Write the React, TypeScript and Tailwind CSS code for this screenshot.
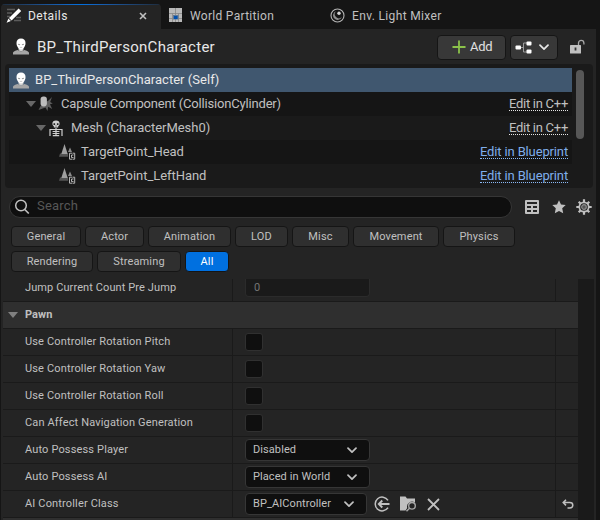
import type { ReactNode } from "react";

const TAGS = [
  [
    { label: "General", width: "w-[70px]" },
    { label: "Actor", width: "w-[59px]" },
    { label: "Animation", width: "w-[83px]" },
    { label: "LOD", width: "w-[53px]" },
    { label: "Misc", width: "w-[57px]" },
    { label: "Movement", width: "w-[86px]" },
    { label: "Physics", width: "w-[72px]" },
  ],
  [
    { label: "Rendering", width: "w-[82px]" },
    { label: "Streaming", width: "w-[84px]" },
    { label: "All", width: "w-[44px]", active: true },
  ],
];

const CHECKS = [
  "Use Controller Rotation Pitch",
  "Use Controller Rotation Yaw",
  "Use Controller Rotation Roll",
  "Can Affect Navigation Generation",
];

function PersonIcon() {
  return (
    <svg width="16" height="17" viewBox="0 0 16 17" className="shrink-0">
      <path d="M0 16.500v-1.800c0-1.300 2.200-2 4.700-2.800L8 13.800l3.300-1.900c2.500.8 4.700 1.500 4.700 2.800v1.800z" fill="#a6a6a6" />
      <path d="M5.600 10h4.800v2.300L8 13.700l-2.400-1.400z" fill="#cfcfcf" />
      <path d="M8 .4c2.900 0 4.500 1.700 4.500 4.500 0 1-.2 2-.5 2.800-.8 2.100-2.400 3.900-4 3.900S4.800 9.800 4 7.700c-.3-.8-.5-1.800-.5-2.800C3.500 2.100 5.100.4 8 .4z" fill="#fff" />
      <path d="M5.100 6.300l2 .5M10.900 6.300l-2 .5" stroke="#999" strokeWidth="1.100" />
      <path d="M6.800 9.400h2.400" stroke="#bbb" strokeWidth=".8" />
    </svg>
  );
}

function DetailsIcon() {
  return (
    <svg width="16" height="16" viewBox="0 0 16 16" className="shrink-0">
      <path d="M1 1.500h8M1 5h5M1 8.500h3M10 9.500h5M8 12.500h7" stroke="#5c5c5c" strokeWidth="1.300" />
      <path d="M12.600.6l2.600 2.400-9.600 9.400-2.600-2.500zM2.400 10.600l2.500 2.500-4.300 1.700z" fill="#fff" />
    </svg>
  );
}

function PartitionIcon() {
  return (
    <svg width="13" height="14" viewBox="0 0 13 14" className="shrink-0">
      <path d="M0 0h13v14H0z" fill="#b9b9b9" />
      <path d="M6.500 0v14M0 5.500h13M3.500 5.500v8.500M9.500 5.500v8.500M0 10.500h13" stroke="#858585" strokeWidth=".8" />
      <path d="M4 7h5.500v4.500H4z" fill="#5f7896" />
      <path d="M5 8h3.500v3H5z" fill="#0050b0" />
    </svg>
  );
}

function LightMixerIcon() {
  return (
    <svg width="15" height="15" viewBox="0 0 15 15" className="shrink-0">
      <circle cx="7.500" cy="7.500" r="6.500" fill="none" stroke="#b5b5b5" strokeWidth="1.100" />
      <path d="M6 3.200A4.500 4.500 0 1 0 11.800 9 3.900 3.900 0 0 1 6 3.200z" fill="#8f8f8f" />
      <circle cx="9" cy="5.300" r="1.700" fill="#d5d5d5" />
    </svg>
  );
}

function CapsuleIcon() {
  return (
    <svg width="15" height="16" viewBox="0 0 15 16" className="shrink-0">
      <path d="M8 6l2.500-1.500L14 1l-1.800 5 2.600 1.500-2.800.8 2.200 4.700-4-2.200-.7 4.200-2-3.600L.5 14l2.200-4.200z" fill="#5d5d5d" />
      <rect x="2.600" y=".6" width="6.300" height="9.800" rx="2.800" fill="#bcbcbc" />
    </svg>
  );
}

function SkeletonIcon() {
  return (
    <svg width="14" height="17" viewBox="0 0 14 17" className="shrink-0">
      <path d="M7 .6c2.300 0 3.600 1.200 3.600 3.200 0 1.300-.6 2-1.400 2.500v1.300H4.800V6.300C4 5.800 3.400 5.100 3.400 3.800 3.400 1.800 4.700.6 7 .6z" fill="#cfcfcf" />
      <path d="M4.500 3.300h1.600v1.600H4.500zM7.900 3.300h1.600v1.600H7.900zM6.600 5.500h.8v1.100h-.8z" fill="#222" />
      <path d="M1 16V9.500h12V16M3.600 11.500h6.800M3.600 13.500h6.800M3.800 15.700h6.400M7 8v8" fill="none" stroke="#cfcfcf" strokeWidth="1.200" />
    </svg>
  );
}

function TargetIcon() {
  return (
    <svg width="17" height="16" viewBox="0 0 17 16" className="shrink-0">
      <path d="M1 9.500L0 12.700h9V9.500z" fill="#555" />
      <path d="M5.500 0l3.200 10H2.300z" fill="#a0a0a0" />
      <path d="M11 3.500l2 4.500H9z" fill="#8b8b8b" />
      <path d="M13 9.200h-2.500v6H13M13.500 9.200h2.200v6h-2.200M14.500 11h-2v2.600h2" fill="none" stroke="#b5b5b5" strokeWidth="1" />
    </svg>
  );
}

function Chevron({ color = "#c0c0c0" }: { color?: string }) {
  return (
    <svg width="10" height="7" viewBox="0 0 10 7" className="shrink-0">
      <path d="M1 1.200l4 4 4-4" fill="none" stroke={color} strokeWidth="1.700" strokeLinecap="round" strokeLinejoin="round" />
    </svg>
  );
}

function Triangle({ color = "#686868" }: { color?: string }) {
  return (
    <svg width="10" height="6" viewBox="0 0 10 6" className="shrink-0">
      <path d="M0 0h10L5 6z" fill={color} />
    </svg>
  );
}

function TableIcon() {
  return (
    <svg width="14" height="14" viewBox="0 0 14 14">
      <rect width="14" height="14" rx="1" fill="#c0c0c0" />
      <path d="M2 2h10v2H2zM2 6h4v2H2zM8 6h4v2H8zM2 10h4v2H2zM8 10h4v2H8z" fill="#242424" />
    </svg>
  );
}

function StarIcon() {
  return (
    <svg width="14" height="14" viewBox="0 0 14 14">
      <path d="M7 .3l2 4.300 4.700.5-3.500 3.200 1 4.900L7 10.900l-4.200 2.300 1-4.900L.3 5.100 5 4.600z" fill="#c0c0c0" />
    </svg>
  );
}

function GearIcon() {
  return (
    <svg width="16" height="16" viewBox="0 0 16 16">
      <path d="M8 .3v15.400M.3 8h15.400M2.700 2.700l10.600 10.600M13.300 2.700L2.700 13.300" stroke="#c0c0c0" strokeWidth="2.200" />
      <circle cx="8" cy="8" r="4.700" fill="#242424" stroke="#c0c0c0" strokeWidth="1.700" />
      <circle cx="8" cy="8" r="2.300" fill="#555" stroke="#8c8c8c" strokeWidth="1.200" />
    </svg>
  );
}

function TreeRow({ indent, icon, label, tracking, link, className, arrow }: {
  indent: string;
  icon: ReactNode;
  label: string;
  tracking: string;
  link: "C++" | "Blueprint";
  className: string;
  arrow?: boolean;
}) {
  return (
    <div className={`flex h-6 items-center pr-1 ${indent} ${className}`}>
      {arrow && <Triangle />}
      <div className={`flex w-[17px] justify-center ${arrow ? "ml-px mr-[7px]" : "mr-[5px]"}`}>{icon}</div>
      <span className={`text-[13px] leading-6 ${tracking}`}>{label}</span>
      <a
        className={`ml-auto border-b border-dotted text-[13px] leading-[13px] ${
          link === "C++" ? "border-[#e5e5e5] tracking-[-0.27px]" : "border-[#8ab8f5] tracking-[-0.14px] text-[#7faeec]"
        }`}
      >
        Edit in {link}
      </a>
    </div>
  );
}

function PropertyRow({ label, children, reset }: { label: string; children: ReactNode; reset?: ReactNode }) {
  return (
    <div className="flex h-[27px] border-b border-[#1a1a1a]">
      <div className="w-[230px] border-r border-[#1a1a1a] pl-[22px] text-[11px] leading-[25px] tracking-[0.15px]">{label}</div>
      <div className="flex w-[323px] items-center border-r border-[#1a1a1a] pl-3">{children}</div>
      <div className="flex flex-1 items-center justify-center">{reset}</div>
    </div>
  );
}

function Select({ value, width }: { value: string; width: string }) {
  return (
    <button className={`flex h-[22px] items-center justify-between rounded-[4px] border border-[#363636] bg-[#0f0f0f] pl-[7px] pr-3 ${width}`}>
      <span className="text-[11px] leading-[18px] tracking-[0.08px]">{value}</span>
      <Chevron />
    </button>
  );
}

export default function App() {
  return (
    <div className="flex h-[520px] w-[600px] flex-col overflow-hidden bg-[#151515] pl-px pr-1 font-['Roboto',sans-serif] text-[#c0c0c0]">
      {/* Tabs */}
      <div className="flex h-[29px] shrink-0 items-end">
        <div className="flex h-[25px] w-[160px] flex-col overflow-hidden rounded-t-[4px] bg-[#242424]">
          <div className="h-px bg-linear-to-r from-[#1d2c3d] via-[#0070e0] to-[#1d2c3d]" />
          <div className="flex flex-1 items-center pb-[2px] pl-[5px] pr-[14px]">
            <DetailsIcon />
            <span className="ml-[6px] text-[12px] leading-[22px] tracking-[0.45px] text-[#e8e8e8]">Details</span>
            <svg width="8" height="8" viewBox="0 0 8 8" className="ml-auto">
              <path d="M1 1l6 6M7 1L1 7" stroke="#c0c0c0" strokeWidth="1.600" />
            </svg>
          </div>
        </div>
        <div className="flex h-[25px] w-[162px] items-center pb-[3px] pl-2">
          <PartitionIcon />
          <span className="ml-2 pt-[2px] text-[12px] tracking-[0.3px]">World Partition</span>
        </div>
        <div className="flex h-[25px] items-center pb-[3px] pl-[7px]">
          <LightMixerIcon />
          <span className="ml-[7px] pt-[2px] text-[12px] tracking-[0.35px]">Env. Light Mixer</span>
        </div>
      </div>

      <div className="flex min-h-0 flex-1 flex-col bg-[#242424]">
        {/* Object header */}
        <div className="flex h-[35px] shrink-0 items-center pl-3 pr-[11px]">
          <PersonIcon />
          <span className="ml-2 pt-px text-[15px] tracking-[0.27px] text-[#e8e8e8]">BP_ThirdPersonCharacter</span>
          <button className="ml-auto mt-px flex h-[25px] w-[69px] items-center rounded-[4px] border border-[#151515] bg-[#383838] pl-[14px]">
            <svg width="14" height="14" viewBox="0 0 14 14">
              <path d="M7 .5v13M.5 7h13" stroke="#8bc24a" strokeWidth="1.800" />
            </svg>
            <span className="ml-1 text-[13px] tracking-[-0.3px] text-[#e0e0e0]">Add</span>
          </button>
          <button className="ml-1 mt-px flex h-[25px] w-[48px] items-center gap-[7px] rounded-[4px] border border-[#151515] bg-[#383838] pl-1">
            <svg width="17" height="13" viewBox="0 0 17 13">
              <path d="M4 6.500h5M12 2H8.500v9H12" fill="none" stroke="#9a9a9a" strokeWidth="1" />
              <rect x=".5" y="4.500" width="5.500" height="4" rx="1" fill="#fff" />
              <rect x="11.500" y=".5" width="5" height="4" rx="1" fill="#fff" />
              <rect x="11.500" y="8.500" width="5" height="4" rx="1" fill="#fff" />
            </svg>
            <Chevron color="#e8e8e8" />
          </button>
          <svg width="15" height="15" viewBox="0 0 15 15" className="mb-px ml-3">
            <path d="M8.500 6V4a2.700 2.700 0 0 1 5.400 0v1.500" fill="none" stroke="#a8a8a8" strokeWidth="1.300" />
            <rect x="0" y="6" width="11" height="8.500" rx=".6" fill="#c0c0c0" />
            <path d="M5.500 8.500v3" stroke="#333" strokeWidth="1.800" />
          </svg>
        </div>

        {/* Component tree */}
        <div className="ml-1 flex h-[124px] w-[588px] shrink-0 rounded-[4px] bg-[#1a1a1a] pl-1 pt-1">
          <div className="w-[563px]">
            <div className="flex h-6 items-center bg-[#40576f] pl-1 text-[#e8e8e8]">
              <PersonIcon />
              <span className="ml-[6px] text-[13px] leading-6 tracking-[0.03px]">BP_ThirdPersonCharacter (Self)</span>
            </div>
            <TreeRow arrow indent="pl-[17px]" icon={<CapsuleIcon />} label="Capsule Component (CollisionCylinder)" tracking="tracking-[-0.17px]" link="C++" className="bg-[#151515]" />
            <TreeRow arrow indent="pl-[27px]" icon={<SkeletonIcon />} label="Mesh (CharacterMesh0)" tracking="tracking-[-0.04px]" link="C++" className="bg-[#1a1a1a]" />
            <TreeRow indent="pl-[50px]" icon={<TargetIcon />} label="TargetPoint_Head" tracking="tracking-[-0.03px]" link="Blueprint" className="bg-[#151515]" />
            <TreeRow indent="pl-[50px]" icon={<TargetIcon />} label="TargetPoint_LeftHand" tracking="tracking-[-0.05px]" link="Blueprint" className="bg-[#1a1a1a]" />
          </div>
          <div className="ml-1 mt-[2px] h-[69px] w-2 rounded-full bg-[#575757]" />
        </div>

        {/* Search */}
        <div className="mt-2 flex shrink-0 items-center pl-2">
          <div className="flex h-[22px] w-[503px] items-center rounded-full border border-[#363636] bg-[#0f0f0f] pl-1">
            <svg width="16" height="16" viewBox="0 0 16 16">
              <circle cx="7" cy="6.500" r="5.300" fill="none" stroke="#c0c0c0" strokeWidth="1.500" />
              <path d="M10.800 10.500l4 4" stroke="#c0c0c0" strokeWidth="1.700" />
            </svg>
            <span className="ml-[7px] pb-[2px] text-[13px] leading-[18px] tracking-[0.2px] text-[#575757]">Search</span>
          </div>
          <div className="ml-[13px] flex items-center">
            <TableIcon />
            <div className="ml-[13px]"><StarIcon /></div>
            <div className="ml-[10px]"><GearIcon /></div>
          </div>
        </div>

        {/* Section filters */}
        <div className="mt-2 flex shrink-0 flex-col gap-1 pl-[10px]">
          {TAGS.map((row, i) => (
            <div key={i} className="flex gap-1">
              {row.map((tag) => (
                <button
                  key={tag.label}
                  className={`h-[21px] rounded-[4px] border border-[#151515] text-[11px] leading-[18px] tracking-[0.15px] ${tag.width} ${
                    "active" in tag ? "bg-[#0070e0] text-white" : "bg-[#2f2f2f]"
                  }`}
                >
                  {tag.label}
                </button>
              ))}
            </div>
          ))}
        </div>

        {/* Properties */}
        <div className="mt-[7px] flex min-h-0 flex-1 pl-[2px]">
          <div className="w-[575px]">
            <div className="flex h-[23px] border-b border-[#1a1a1a]">
              <div className="w-[230px] border-r border-[#1a1a1a] pl-[22px] text-[11px] leading-[17px] tracking-[0.1px]">Jump Current Count Pre Jump</div>
              <div className="w-[323px] border-r border-[#1a1a1a] pl-3">
                <div className="h-[18px] w-[125px] rounded-b-[4px] border border-t-0 border-[#2b2b2b] bg-[#1a1a1a] pl-2 text-[11px] leading-[17px] text-[#757575]">0</div>
              </div>
            </div>
            <div className="flex h-[27px] items-center border-b border-[#1a1a1a] bg-[#2f2f2f] pl-[5px]">
              <Triangle color="#808080" />
              <span className="ml-[7px] text-[11px] leading-[24px] font-bold tracking-[0.05px]">Pawn</span>
            </div>
            {CHECKS.map((label) => (
              <PropertyRow key={label} label={label}>
                <div className="h-[18px] w-[18px] rounded-[3px] border border-[#303030] bg-[#0f0f0f]" />
              </PropertyRow>
            ))}
            <PropertyRow label="Auto Possess Player">
              <Select value="Disabled" width="w-[125px]" />
            </PropertyRow>
            <PropertyRow label="Auto Possess AI">
              <Select value="Placed in World" width="w-[125px]" />
            </PropertyRow>
            <PropertyRow
              label="AI Controller Class"
              reset={
                <svg width="12" height="11" viewBox="0 0 12 11" className="ml-px">
                  <path d="M4 .8L1.200 3.600 4 6.400M1.500 3.600h6.300c4 0 4 5.400 0 5.400H5.500" fill="none" stroke="#c0c0c0" strokeWidth="1.500" />
                </svg>
              }
            >
              <Select value="BP_AIController" width="w-[122px]" />
              <svg width="16" height="16" viewBox="0 0 16 16" className="ml-[7px]">
                <path d="M14 4.400A6.900 6.900 0 1 0 14 11.600" fill="none" stroke="#c0c0c0" strokeWidth="1.500" />
                <path d="M15.500 8H5M8.300 4.500L4.800 8l3.500 3.500" fill="none" stroke="#c0c0c0" strokeWidth="1.900" />
              </svg>
              <svg width="17" height="16" viewBox="0 0 17 16" className="ml-[10px]">
                <path d="M0 .5h5.500l1.500 2h8v4.200a5 5 0 0 0-7.800 5.300l-1.700 2.500H0z" fill="#c0c0c0" />
                <circle cx="12" cy="9.800" r="3.300" fill="#242424" stroke="#a8a8a8" strokeWidth="1.400" />
                <path d="M9.500 12.300l-3 3" stroke="#a8a8a8" strokeWidth="1.500" />
              </svg>
              <svg width="13" height="13" viewBox="0 0 13 13" className="ml-[10px]">
                <path d="M1 1l11 11M12 1L1 12" stroke="#c0c0c0" strokeWidth="1.800" />
              </svg>
            </PropertyRow>
            <div className="h-[2px] bg-[#2f2f2f]" />
          </div>
          <div className="w-4 bg-[#1a1a1a]" />
        </div>
      </div>
    </div>
  );
}
